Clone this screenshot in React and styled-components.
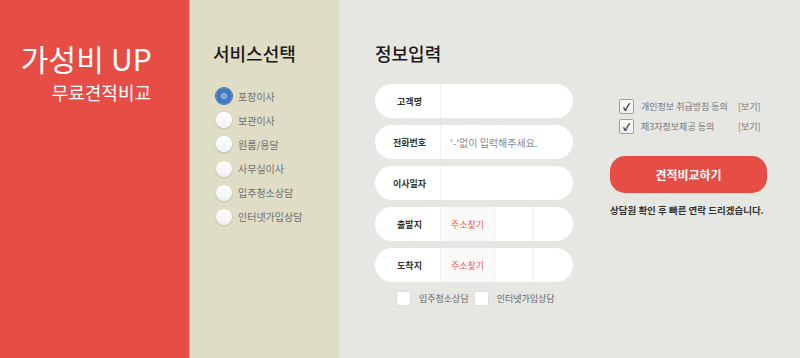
import React from 'react';
import styled, { createGlobalStyle } from 'styled-components';

const GlobalStyle = createGlobalStyle`
  html, body {
    margin: 0;
    padding: 0;
    background: #e6e6e2;
  }
  * {
    box-sizing: border-box;
  }
  body {
    font-family: 'Noto Sans CJK KR', 'Noto Sans', sans-serif;
  }
`;

const services = ['포장이사', '보관이사', '원룸/용달', '사무실이사', '입주청소상담', '인터넷가입상담'];

const fields = [
  { label: '고객명' },
  { label: '전화번호', placeholder: "'-'없이 입력해주세요." },
  { label: '이사일자' },
  { label: '출발지', address: true },
  { label: '도착지', address: true },
];

const App = () => {
  return (
    <>
      <GlobalStyle />
      <Page>
        <Hero>
          <HeroTitle>가성비 UP</HeroTitle>
          <HeroSub>무료견적비교</HeroSub>
        </Hero>

        <Services>
          <Heading>서비스선택</Heading>
          <RadioList>
            {services.map((name, i) => (
              <RadioRow key={name}>
                <Radio checked={i === 0} />
                <span>{name}</span>
              </RadioRow>
            ))}
          </RadioList>
        </Services>

        <Main>
          <FormCol>
            <Heading>정보입력</Heading>
            <Fields>
              {fields.map((f) => (
                <Field key={f.label}>
                  <FieldLabel>{f.label}</FieldLabel>
                  {f.address ? (
                    <>
                      <AddrBtn>주소찾기</AddrBtn>
                      <AddrCell />
                      <AddrCell last />
                    </>
                  ) : (
                    <FieldInput>{f.placeholder}</FieldInput>
                  )}
                </Field>
              ))}
            </Fields>
            <Extras>
              <Extra>
                <Box />
                <span>입주청소상담</span>
              </Extra>
              <Extra>
                <Box />
                <span>인터넷가입상담</span>
              </Extra>
            </Extras>
          </FormCol>

          <SideCol>
            <Agrees>
              <Agree>
                <Check>✓</Check>
                <AgreeText>개인정보 취급방침 동의</AgreeText>
                <View>[보기]</View>
              </Agree>
              <Agree>
                <Check>✓</Check>
                <AgreeText>제3자정보제공 동의</AgreeText>
                <View>[보기]</View>
              </Agree>
            </Agrees>
            <Submit>견적비교하기</Submit>
            <Notice>상담원 확인 후 빠른 연락 드리겠습니다.</Notice>
          </SideCol>
        </Main>
      </Page>
    </>
  );
};

const Page = styled.div`
  display: flex;
  width: 800px;
  height: 358px;
  overflow: hidden;
`;

const Hero = styled.div`
  width: 190px;
  flex-shrink: 0;
  background: #e64d45;
  border-right: 1px solid #f0a08a;
  color: #fff;
  text-align: right;
  padding: 38px 37px 0 0;
`;

const HeroTitle = styled.div`
  font-size: 30px;
  line-height: 40px;
  font-weight: 400;
  letter-spacing: 0.2px;
`;

const HeroSub = styled.div`
  font-size: 18px;
  line-height: 24px;
  margin-top: 2px;
  margin-right: 1px;
`;

const Services = styled.div`
  width: 149px;
  flex-shrink: 0;
  background: #dfddc6;
  padding: 40px 0 0 23px;
`;

const Heading = styled.h2`
  margin: 0;
  font-size: 18px;
  line-height: 26px;
  font-weight: 500;
  color: #1a1a1a;
`;

const RadioList = styled.div`
  display: flex;
  flex-direction: column;
  gap: 8.2px;
  margin-top: 22px;
`;

const RadioRow = styled.div`
  display: flex;
  align-items: center;
  gap: 6px;
  height: 16px;
  font-size: 10px;
  color: #707070;
`;

const Radio = styled.span`
  width: 16px;
  height: 16px;
  border-radius: 50%;
  flex-shrink: 0;
  margin-left: 3px;
  background: ${(p) =>
    p.checked
      ? 'radial-gradient(circle, #7aa7d8 0 3px, #3f78bd 4px)'
      : 'linear-gradient(#ffffff, #f1f1f1)'};
  box-shadow: ${(p) =>
    p.checked ? '0 0 0 1px #3a6fae' : '0 1px 2px rgba(0,0,0,0.18)'};
`;

const Main = styled.div`
  flex: 1;
  display: flex;
  background: #e6e6e2;
  padding: 40px 0 0 36px;
`;

const FormCol = styled.div`
  width: 198px;
  display: flex;
  flex-direction: column;
`;

const Fields = styled.div`
  display: flex;
  flex-direction: column;
  gap: 7px;
  margin-top: 18px;
`;

const Field = styled.div`
  display: flex;
  height: 34px;
  background: #fff;
  border-radius: 17px;
  overflow: hidden;
`;

const FieldLabel = styled.div`
  width: 66px;
  flex-shrink: 0;
  display: flex;
  align-items: center;
  justify-content: center;
  padding-left: 4px;
  font-size: 9px;
  font-weight: 700;
  color: #333;
  border-right: 1px solid #efefed;
`;

const FieldInput = styled.div`
  flex: 1;
  display: flex;
  align-items: center;
  padding-left: 9px;
  font-size: 10px;
  color: #8a8a8a;
`;

const AddrBtn = styled.div`
  width: 54px;
  display: flex;
  align-items: center;
  justify-content: center;
  background: #fbfaf8;
  border-right: 1px solid #efefed;
  font-size: 9px;
  color: #ef5a4f;
`;

const AddrCell = styled.div`
  width: ${(p) => (p.last ? 'auto' : '39px')};
  flex: ${(p) => (p.last ? 1 : 'none')};
  border-right: ${(p) => (p.last ? 'none' : '1px solid #efefed')};
`;

const Extras = styled.div`
  display: flex;
  gap: 5px;
  margin-top: 9px;
  padding-left: 21px;
`;

const Extra = styled.div`
  display: flex;
  align-items: center;
  gap: 8px;
  font-size: 9px;
  color: #666;
`;

const Box = styled.span`
  width: 15px;
  height: 15px;
  background: #fff;
  border: 1px solid #dcdcd8;
  border-radius: 2px;
`;

const SideCol = styled.div`
  display: flex;
  flex-direction: column;
  padding: 59px 0 0 37px;
`;

const Agrees = styled.div`
  display: flex;
  flex-direction: column;
  gap: 5px;
  padding-left: 9px;
`;

const Agree = styled.div`
  display: flex;
  align-items: center;
  height: 15px;
  font-size: 9px;
  color: #777;
`;

const Check = styled.span`
  width: 15px;
  height: 15px;
  display: flex;
  align-items: center;
  justify-content: center;
  background: linear-gradient(#fdfdfd, #eeeeee);
  border: 1px solid #9aa3ad;
  border-radius: 2px;
  font-size: 10px;
  font-weight: 700;
  color: #222;
`;

const AgreeText = styled.span`
  width: 97px;
  margin-left: 7px;
`;

const View = styled.span`
  color: #777;
`;

const Submit = styled.button`
  width: 157px;
  height: 37px;
  margin-top: 22px;
  border: none;
  border-radius: 15px;
  background: #e64d45;
  color: #fff;
  font-family: inherit;
  font-size: 12px;
  font-weight: 700;
  cursor: pointer;
`;

const Notice = styled.p`
  margin: 10px 0 0;
  font-size: 9.5px;
  font-weight: 700;
  color: #333;
`;

export default App;
